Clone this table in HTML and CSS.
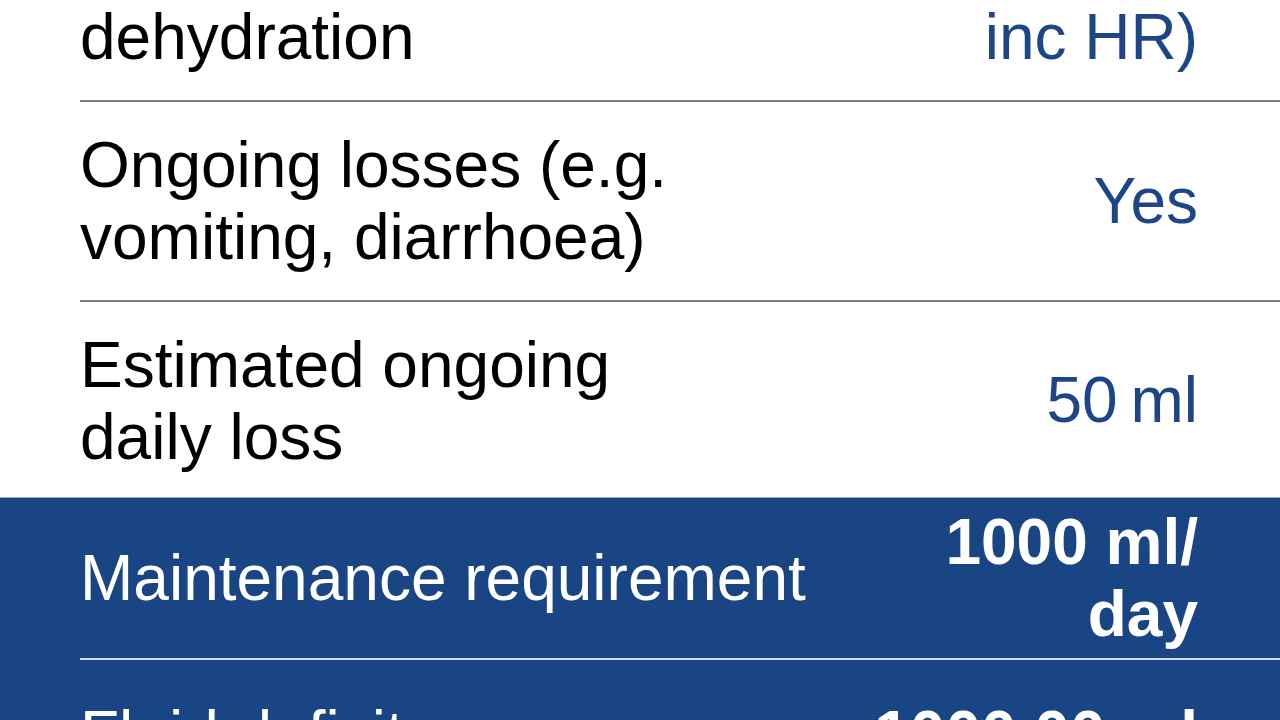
FILE: index.html
```html
<!DOCTYPE html>
<html lang="en">
<head>
  <meta charset="UTF-8">
  <meta name="viewport" content="width=device-width, initial-scale=1.0">
  <title>Fluid calculator</title>
  <link rel="stylesheet" href="styles.css">
</head>
<body>
  <div class="tabela">
    <div class="linha">
      <div class="celula">
        <div class="rotulo">Clinical signs of<br>dehydration</div>
        <div class="valor">Mild (e.a.<br>inc HR)</div>
      </div>
    </div>
    <div class="linha">
      <div class="celula">
        <div class="rotulo">Ongoing losses (e.g.<br>vomiting, diarrhoea)</div>
        <div class="valor">Yes</div>
      </div>
    </div>
    <div class="linha ultima">
      <div class="celula">
        <div class="rotulo">Estimated ongoing<br>daily loss</div>
        <div class="valor">50&#8201;ml</div>
      </div>
    </div>
    <div class="resultados">
      <div class="linha">
        <div class="celula">
          <div class="rotulo">Maintenance requirement</div>
          <div class="valor">1000 ml/<br>day</div>
        </div>
      </div>
      <div class="linha deficit">
        <div class="celula">
          <div class="rotulo">Fluid deficit</div>
          <div class="valor">1000.00 ml</div>
        </div>
      </div>
    </div>
  </div>
</body>
</html>
```

FILE: styles.css
```css
body {
  margin: 0;
  font-family: "Liberation Sans", Arial, Helvetica, sans-serif;
  background-color: #ffffff;
  overflow: hidden;
}
.tabela {
  margin-top: -98px;
  font-size: 64px;
  line-height: 72px;
}
.linha {
  padding-left: 80px;
}
.celula {
  display: flex;
  align-items: center;
  justify-content: space-between;
  padding-right: 82px;
  border-bottom: 2px solid #7d7d7d;
}
.ultima .celula {
  border-bottom: none;
}
.rotulo {
  padding: 27px 0;
  color: #000000;
}
.ultima .rotulo {
  padding-bottom: 24px;
}
.valor {
  padding: 8px 0;
  text-align: right;
  color: #1d4689;
}
.resultados {
  background-color: #1a4584;
  border-top: 1px solid #9db0d0;
}
.resultados .celula {
  border-bottom-color: #d2dcee;
}
.resultados .rotulo {
  color: #ffffff;
}
.resultados .valor {
  color: #ffffff;
  font-weight: bold;
}
.deficit .rotulo {
  padding: 38px 0;
}
```
